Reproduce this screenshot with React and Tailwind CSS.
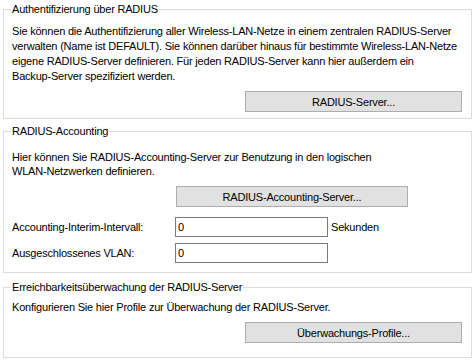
function Group({ title, className, children }) {
  return (
    <div className={`relative ml-[3px] w-[469px] border border-[#dcdcdc] ${className}`}>
      <span className="absolute left-[7px] top-[-8px] whitespace-nowrap bg-white px-[1px] leading-[14px]">{title}</span>
      {children}
    </div>
  );
}

function Button({ children, className }) {
  return (
    <button
      type="button"
      className={`flex h-[21px] items-center justify-center border border-[#adadad] bg-[#e1e1e1] leading-[14px] text-black ${className}`}
    >
      {children}
    </button>
  );
}

function Field({ label, value, unit }) {
  return (
    <div className="flex h-[20px] items-center">
      <span className="w-[163px] leading-[14px]">{label}</span>
      <div className="flex h-[20px] w-[153px] items-center border border-[#7a7a7a] px-[2px] leading-[14px]">{value}</div>
      {unit && <span className="ml-[3px] leading-[14px]">{unit}</span>}
    </div>
  );
}

export default function App() {
  return (
    <div
      className="h-[361px] w-[476px] overflow-hidden whitespace-nowrap bg-white pt-[9px] text-[11px] tracking-[-0.2px] text-black"
      style={{ fontFamily: '"Liberation Sans", Arial, sans-serif' }}
    >
      <Group title="Authentifizierung über RADIUS" className="h-[110px]">
        <p className="pl-[8px] pt-[14px] leading-[15px]">
          Sie können die Authentifizierung aller Wireless-LAN-Netze in einem zentralen RADIUS-Server
          <br />
          verwalten (Name ist DEFAULT). Sie können darüber hinaus für bestimmte Wireless-LAN-Netze
          <br />
          eigene RADIUS-Server definieren. Für jeden RADIUS-Server kann hier außerdem ein
          <br />
          Backup-Server spezifiziert werden.
        </p>
        <div className="mt-[7px] flex justify-end pr-[9px]">
          <Button className="w-[217px]">RADIUS-Server...</Button>
        </div>
      </Group>

      <Group title="RADIUS-Accounting" className="mt-[12px] h-[142px]">
        <p className="pl-[8px] pt-[18px] leading-[14px]">
          Hier können Sie RADIUS-Accounting-Server zur Benutzung in den logischen
          <br />
          WLAN-Netzwerken definieren.
        </p>
        <div className="mt-[8px] pl-[172px]">
          <Button className="w-[232px]">RADIUS-Accounting-Server...</Button>
        </div>
        <div className="mt-[10px] flex flex-col gap-[6px] pl-[8px]">
          <Field label="Accounting-Interim-Intervall:" value="0" unit="Sekunden" />
          <Field label="Ausgeschlossenes VLAN:" value="0" />
        </div>
      </Group>

      <Group title="Erreichbarkeitsüberwachung der RADIUS-Server" className="mt-[14px] h-[71px]">
        <p className="pl-[8px] pt-[12px] leading-[14px]">
          Konfigurieren Sie hier Profile zur Überwachung der RADIUS-Server.
        </p>
        <div className="mt-[8px] flex justify-end pr-[9px]">
          <Button className="w-[217px]">Überwachungs-Profile...</Button>
        </div>
      </Group>
    </div>
  );
}
